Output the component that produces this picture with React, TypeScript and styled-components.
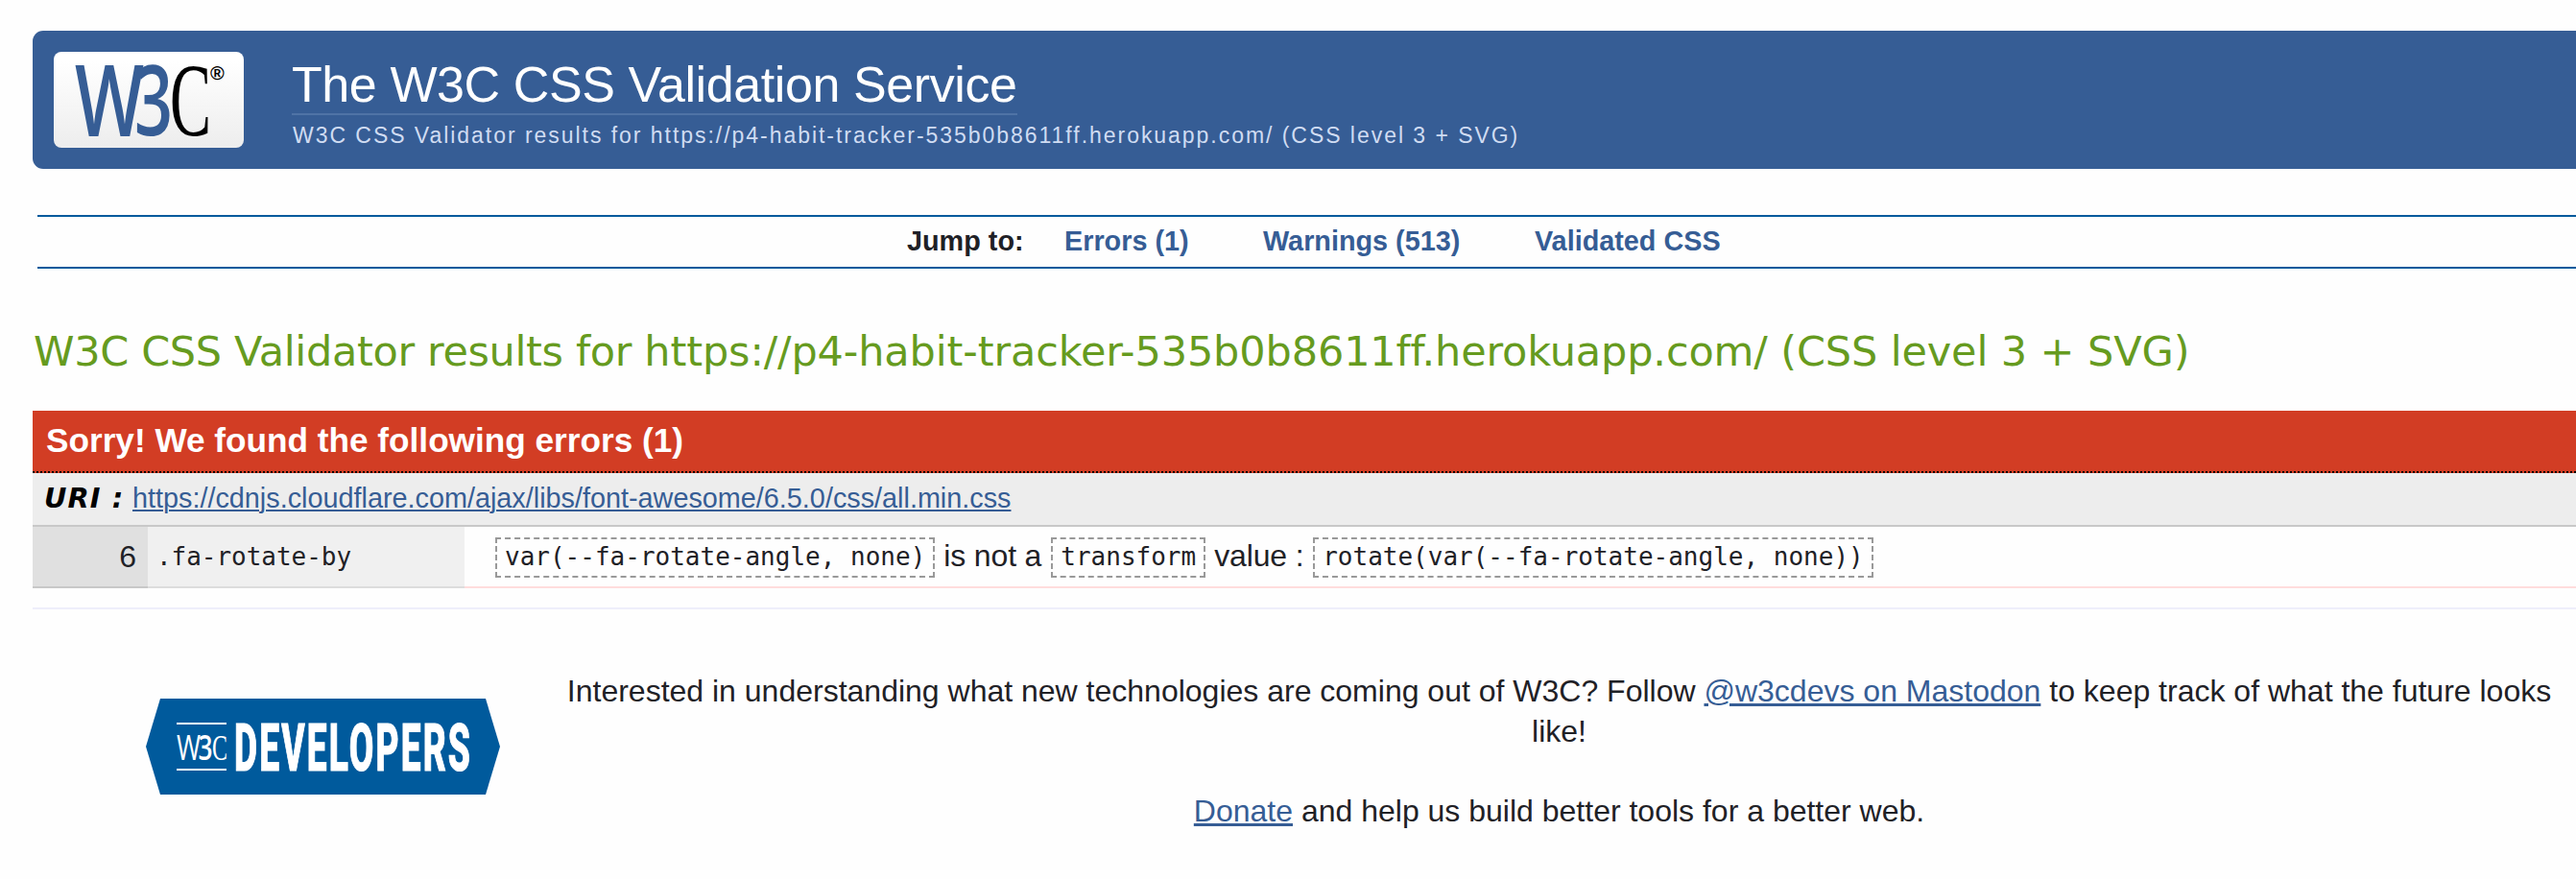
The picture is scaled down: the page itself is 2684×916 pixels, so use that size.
import React from "react";
import styled, { createGlobalStyle } from "styled-components";

const GlobalStyle = createGlobalStyle`
  html, body { margin: 0; background: #fefefe; overflow: hidden; }
  *, *::before, *::after { box-sizing: border-box; }
`;

const Page = styled.div`
  width: 2684px;
  height: 916px;
  overflow: hidden;
  padding: 32px 0 0 34px;
  background: #fefefe;
  color: #1f2126;
  font-family: "Liberation Sans", Arial, sans-serif;
  font-size: 32px;
`;

const Banner = styled.header`
  display: flex;
  height: 144px;
  padding-left: 22px;
  background: #365d95;
  border-radius: 11px 0 0 11px;
`;

const LogoBox = styled.a`
  flex: none;
  width: 198px;
  height: 100px;
  margin: 22px 50px 0 0;
  border-radius: 8px;
  background: linear-gradient(#ffffff 10%, #ededed);
  svg { display: block; overflow: visible; }
`;

const BannerText = styled.div`
  display: flex;
  flex-direction: column;
  align-items: flex-start;
  padding-top: 26px;
  white-space: nowrap;
`;

const Title = styled.h1`
  margin: 0 0 8px;
  border-bottom: 2px solid #4f73a6;
  color: #fff;
  font-size: 52px;
  font-weight: 400;
  line-height: 60px;
  letter-spacing: -0.41px;
`;

const Tagline = styled.p`
  margin: 0 0 0 1px;
  color: #d0dcf2;
  font-size: 23px;
  line-height: 26px;
  letter-spacing: 1.96px;
`;

const Nav = styled.nav`
  display: flex;
  height: 56px;
  margin: 48px 0 0 5px;
  padding: 9px 0 0 906px;
  border-top: 2px solid #005a9c;
  border-bottom: 2px solid #005a9c;
  font-size: 28.8px;
  font-weight: 700;
  line-height: 32px;
  white-space: nowrap;
`;

const NavItem = styled.span<{ $width: number }>`
  width: ${(p) => p.$width}px;
`;

const NavLink = styled(NavItem)`
  color: #365d95;
`;

const ResultTitle = styled.h2`
  margin: 61px 0 37px 1px;
  color: #669b1f;
  font: 400 43px/50px "DejaVu Sans", Verdana, sans-serif;
  letter-spacing: -0.13px;
  white-space: nowrap;
`;

const ResultLead = styled.span`
  letter-spacing: -0.35px;
`;

const ErrorTitle = styled.h3`
  height: 65px;
  margin: 0;
  padding: 11px 0 0 14px;
  border-bottom: 2px dotted #000;
  background: #d23d24;
  color: #fff;
  font-size: 35.2px;
  line-height: 40px;
  white-space: nowrap;
`;

const UriRow = styled.h4`
  display: flex;
  align-items: baseline;
  height: 56px;
  margin: 0;
  padding: 8px 0 0 12px;
  border-bottom: 2px solid #c8c8c8;
  background: #ededed;
  color: #000;
  font: italic 700 28.8px/36px "DejaVu Sans", Verdana, sans-serif;
  white-space: nowrap;
`;

const UriLabel = styled.span`
  width: 92px;
  letter-spacing: 1.1px;
`;

const Link = styled.a<{ $line?: number }>`
  color: #365d95;
  text-decoration: underline;
  text-decoration-thickness: ${(p) => p.$line ?? 2}px;
  text-underline-offset: 2px;
`;

const UriLink = styled(Link)`
  font: 400 28.8px/36px "Liberation Sans", Arial, sans-serif;
`;

const ErrorRow = styled.div`
  display: grid;
  grid-template-columns: 120px 330px 1fr;
  height: 64px;
  white-space: nowrap;
`;

const Cell = styled.div<{ $bg: string; $line: string }>`
  display: flex;
  align-items: baseline;
  padding-top: 10px;
  line-height: 42px;
  background: ${(p) => p.$bg};
  border-bottom: 2px solid ${(p) => p.$line};
`;

const LineCell = styled(Cell)`
  justify-content: flex-end;
  padding-right: 12px;
`;

const ContextCell = styled(Cell)`
  padding-left: 9px;
  font: 26px/42px "DejaVu Sans Mono", Menlo, monospace;
  letter-spacing: -0.03px;
`;

const MessageCell = styled(Cell)`
  align-items: flex-start;
  padding-left: 32px;
`;

const Word = styled.span<{ $width: number }>`
  width: ${(p) => p.$width}px;
  margin-top: -1px;
  padding-left: 9px;
  letter-spacing: -0.15px;
`;

const Code = styled.code`
  height: 42px;
  margin-top: 1px;
  padding: 0 8px;
  border: 2px dashed #999;
  font: 26px/37px "DejaVu Sans Mono", Menlo, monospace;
`;

const Footer = styled.footer`
  display: flex;
  margin-top: 20px;
  border-top: 2px solid #eeeefb;
`;

const Badge = styled.a`
  flex: none;
  width: 370px;
  margin: 93px 66px 0 118px;
  svg { display: block; }
`;

const Notes = styled.div`
  width: 2073px;
  padding-top: 64px;
  text-align: center;
  line-height: 42px;
`;

const Note = styled.p`
  margin: 0 0 41px;
`;

const W3CLogo = () => (
  <svg width="198" height="100" viewBox="0 0 198 100" fontFamily="Liberation Sans, sans-serif">
    <g fill="#365d95" fontFamily="Open Sans, sans-serif">
      <text x="22" y="88" fontSize="103" fontWeight="600" textLength="72" lengthAdjust="spacingAndGlyphs">W</text>
      <text x="84" y="87" fontSize="102" fontWeight="600" textLength="40" lengthAdjust="spacingAndGlyphs">3</text>
    </g>
    <text x="121" y="87" fontSize="109" fontWeight="400" fontFamily="Liberation Serif, serif" textLength="43" lengthAdjust="spacingAndGlyphs">C</text>
    <text x="163" y="29" fontSize="20" fontWeight="700">®</text>
  </svg>
);

const DevelopersLogo = () => (
  <svg width="370" height="100" viewBox="0 0 370 100">
    <path d="M15 0H354L369 50L354 100H15L0 50Z" fill="#005a9c" />
    <path d="M32 26H84M32 74H84" stroke="#fff" strokeWidth="2" />
    <g fill="#fff" fontFamily="Open Sans, sans-serif" fontSize="36">
      <text x="32" y="63.500" textLength="25" lengthAdjust="spacingAndGlyphs">W</text>
      <text x="54.500" y="63.500" fontWeight="600" textLength="15" lengthAdjust="spacingAndGlyphs">3</text>
      <text x="69" y="63.500" fontSize="38" fontFamily="Liberation Serif, serif" textLength="16" lengthAdjust="spacingAndGlyphs">C</text>
    </g>
    <text x="92" y="75" fill="#fff" stroke="#fff" strokeWidth="1.200" fontFamily="Roboto, sans-serif" fontWeight="800" fontSize="69" letterSpacing="4" textLength="248" lengthAdjust="spacingAndGlyphs">DEVELOPERS</text>
  </svg>
);

export default function App() {
  return (
    <Page>
      <GlobalStyle />
      <Banner>
        <LogoBox><W3CLogo /></LogoBox>
        <BannerText>
          <Title>The W3C CSS Validation Service</Title>
          <Tagline>W3C CSS Validator results for https://p4-habit-tracker-535b0b8611ff.herokuapp.com/ (CSS level 3 + SVG)</Tagline>
        </BannerText>
      </Banner>
      <Nav>
        <NavItem $width={164}>Jump to:</NavItem>
        <NavLink $width={207}>Errors (1)</NavLink>
        <NavLink $width={283}>Warnings (513)</NavLink>
        <NavLink $width={200}>Validated CSS</NavLink>
      </Nav>
      <ResultTitle>
        <ResultLead>W3C CSS Validator results for </ResultLead>
        https://p4-habit-tracker-535b0b8611ff.herokuapp.com/ (CSS level 3 + SVG)
      </ResultTitle>
      <ErrorTitle>Sorry! We found the following errors (1)</ErrorTitle>
      <UriRow>
        <UriLabel>URI :</UriLabel>
        <UriLink>https://cdnjs.cloudflare.com/ajax/libs/font-awesome/6.5.0/css/all.min.css</UriLink>
      </UriRow>
      <ErrorRow>
        <LineCell $bg="#e0e0e0" $line="#c8c8c8">6</LineCell>
        <ContextCell $bg="#f0f0f0" $line="#dddddd">.fa-rotate-by</ContextCell>
        <MessageCell $bg="#fefefe" $line="#ffdddd">
          <Code>var(--fa-rotate-angle, none)</Code>
          <Word $width={121}>is not a</Word>
          <Code>transform</Code>
          <Word $width={112}>value :</Word>
          <Code>rotate(var(--fa-rotate-angle, none))</Code>
        </MessageCell>
      </ErrorRow>
      <Footer>
        <Badge><DevelopersLogo /></Badge>
        <Notes>
          <Note>
            Interested in understanding what new technologies are coming out of W3C? Follow{" "}
            <Link $line={3}>@w3cdevs on Mastodon</Link> to keep track of what the future looks like!
          </Note>
          <Note><Link $line={3}>Donate</Link> and help us build better tools for a better web.</Note>
        </Notes>
      </Footer>
    </Page>
  );
}
